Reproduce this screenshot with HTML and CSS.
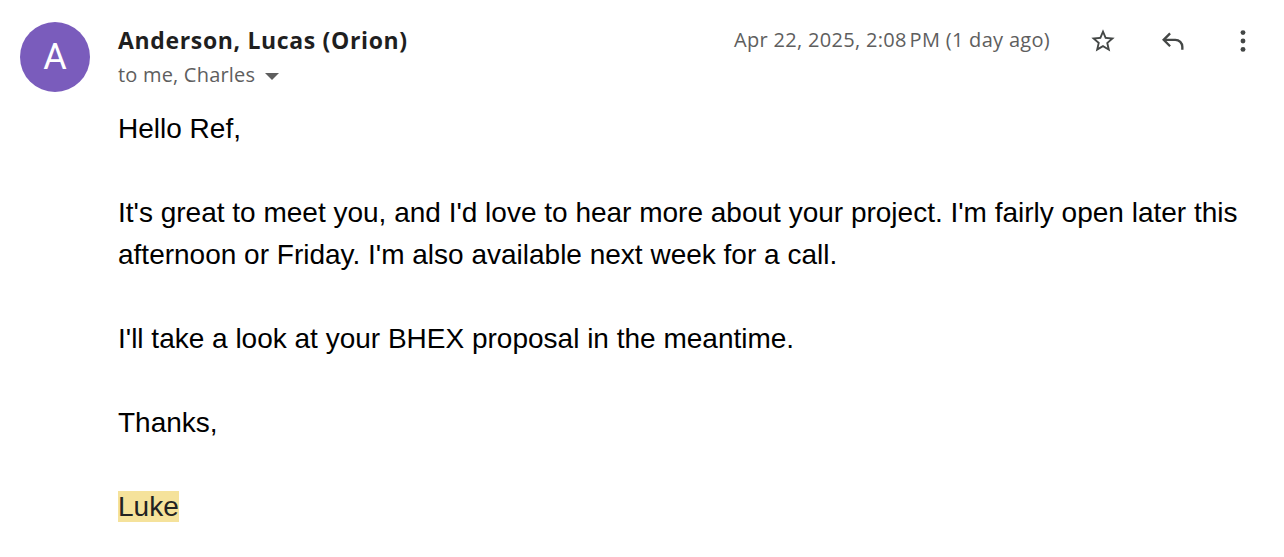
FILE: index.html
```html
<!DOCTYPE html>
<html lang="en">
<head>
<meta charset="utf-8">
<title>Email</title>
<link rel="stylesheet" href="styles.css">
</head>
<body>
<div class="msg">
  <div class="avatar">A</div>
  <div class="content">
    <div class="head">
      <div class="who">
        <div class="name">Anderson, Lucas (Orion)</div>
        <div class="to">to me, Charles <span class="caret"></span></div>
      </div>
      <div class="meta">
        <span class="date">Apr 22, 2025, 2:08&#8239;PM (1 day ago)</span>
        <div class="actions">
          <span class="btn">
            <svg width="28" height="28" viewBox="0 0 24 24"><path fill="#444746" d="M22 9.24l-7.19-.62L12 2 9.19 8.63 2 9.24l5.46 4.73L5.82 21 12 17.27 18.18 21l-1.63-7.03L22 9.24zM12 15.4l-3.76 2.27 1-4.28-3.32-2.88 4.38-.38L12 6.1l1.71 4.04 4.38.38-3.32 2.88 1 4.28L12 15.4z"/></svg>
          </span>
          <span class="btn">
            <svg width="28" height="28" viewBox="0 0 24 24" fill="none" stroke="#444746" stroke-width="2" stroke-linecap="butt" stroke-linejoin="miter"><path d="M9.5 5.5L4 11l5.5 5.5"/><path d="M4.5 11H14a6 6 0 0 1 6 6v2.5"/></svg>
          </span>
          <span class="btn">
            <svg width="28" height="28" viewBox="0 0 24 24" fill="#444746"><circle cx="12" cy="4.8" r="2.1"/><circle cx="12" cy="12" r="2.1"/><circle cx="12" cy="19.2" r="2.1"/></svg>
          </span>
        </div>
      </div>
    </div>
    <div class="body">
      <p>Hello Ref,</p>
      <p>It's great to meet you, and I'd love to hear more about your project. I'm fairly open later this afternoon or Friday. I'm also available next week for a call.</p>
      <p>I'll take a look at your BHEX proposal in the meantime.</p>
      <p>Thanks,</p>
      <p><span class="hl">Luke</span></p>
    </div>
  </div>
</div>
</body>
</html>
```

FILE: styles.css
```css
html, body {
  margin: 0;
  padding: 0;
  background: #ffffff;
}

.msg {
  display: flex;
  align-items: flex-start;
  padding: 22px 21px 0 20px;
}

.avatar {
  flex: 0 0 70px;
  width: 70px;
  height: 70px;
  border-radius: 50%;
  background: #7a5cbc;
  color: #ffffff;
  font-family: Roboto, "Liberation Sans", sans-serif;
  font-size: 36px;
  line-height: 70px;
  text-align: center;
  margin-right: 28px;
}

.content {
  flex: 1;
  min-width: 0;
}

.head {
  display: flex;
  justify-content: space-between;
  align-items: flex-start;
}

.name {
  font-family: "Open Sans", Roboto, sans-serif;
  font-weight: 700;
  font-size: 23px;
  line-height: 28px;
  color: #1f1f1f;
  margin-top: 4px;
  letter-spacing: 0.65px;
}

.to {
  font-family: "Open Sans", Roboto, sans-serif;
  font-size: 20px;
  line-height: 28px;
  color: #5e5e5e;
  margin-top: 7px;
  letter-spacing: 0.2px;
  display: flex;
  align-items: center;
}

.caret {
  display: inline-block;
  width: 0;
  height: 0;
  border-left: 7px solid transparent;
  border-right: 7px solid transparent;
  border-top: 7px solid #5e5e5e;
  margin-left: 10px;
  margin-top: 2px;
}

.meta {
  display: flex;
  align-items: center;
  margin-top: 3px;
}

.date {
  font-family: "Open Sans", Roboto, sans-serif;
  font-size: 20px;
  line-height: 30px;
  color: #5e5e5e;
  letter-spacing: 0.3px;
  margin-right: 33px;
  margin-top: -3px;
}

.actions {
  display: flex;
  gap: 30px;
}

.btn {
  width: 40px;
  height: 32px;
  display: flex;
  align-items: center;
  justify-content: center;
}

.body {
  margin-top: 19px;
  font-family: "Liberation Sans", Arial, sans-serif;
  font-size: 28px;
  line-height: 42px;
  color: #000000;
}

.body p {
  margin: 0 0 42px 0;
}

.hl {
  background: #f5e29b;
  color: #222222;
}
```
